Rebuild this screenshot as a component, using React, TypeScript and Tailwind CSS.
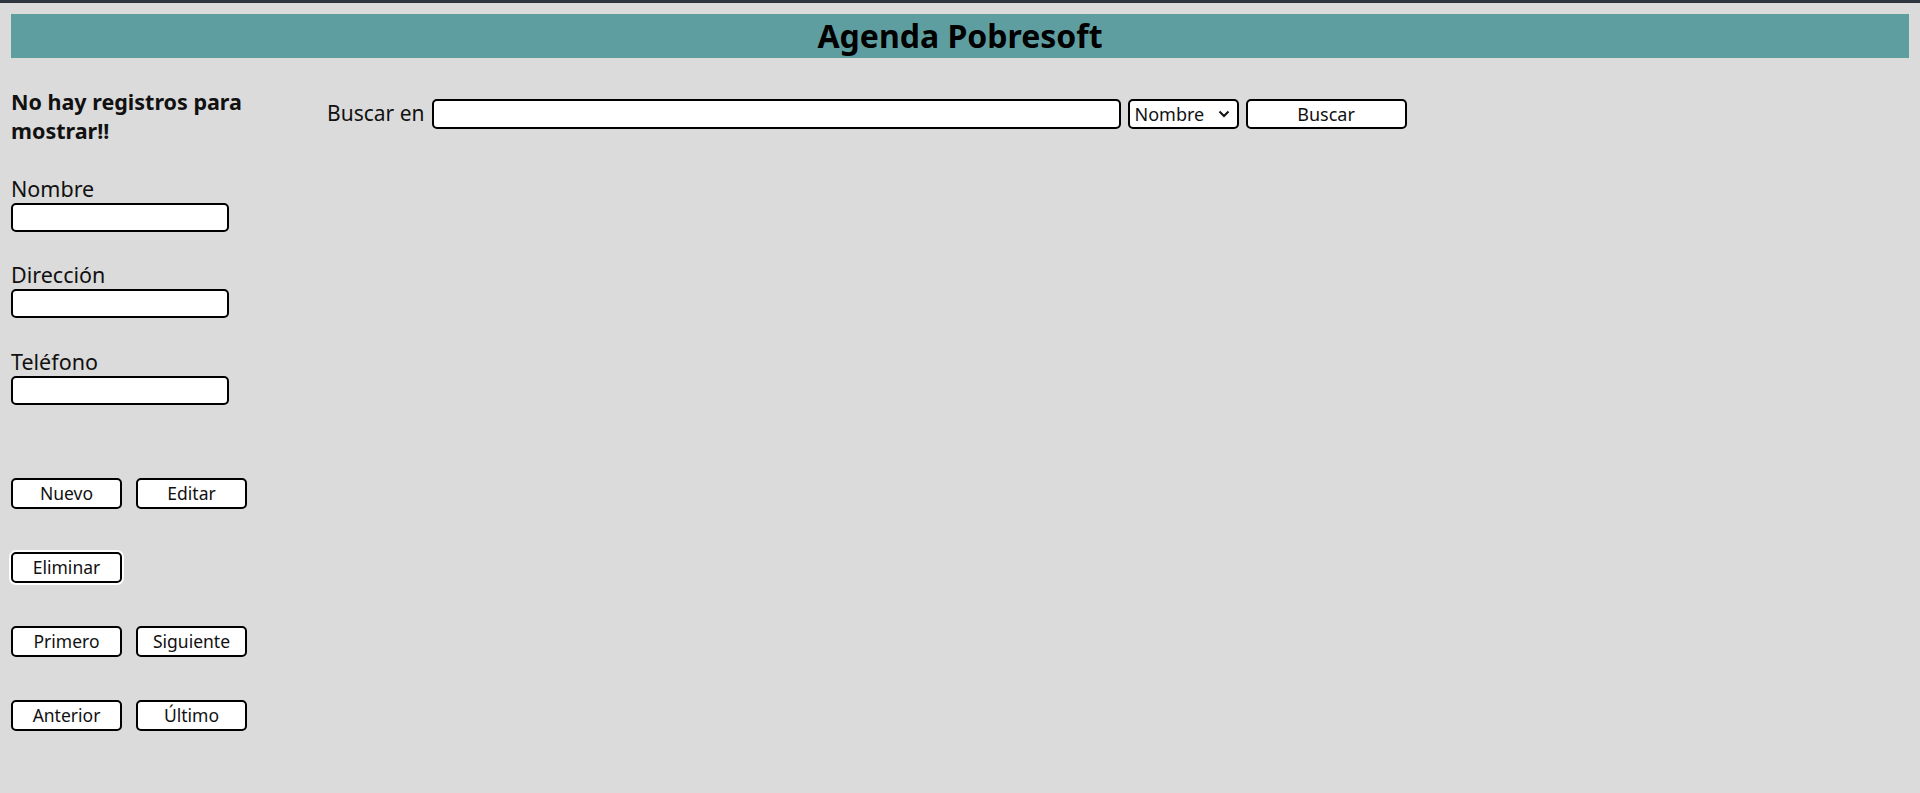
import React from 'react';

const btn =
    'h-[31px] w-[111px] rounded-[5px] border-2 border-black bg-white text-[17.5px] leading-none text-[#111]';

const Field: React.FC<{ label: string; className?: string }> = ({ label, className }) => (
    <div className={className}>
        <label className="block text-[21.5px] leading-[29px] text-[#111]">{label}</label>
        <input type="text" className="block h-[29px] w-[218px] rounded-[5px] border-2 border-black bg-white px-1 outline-none" />
    </div>
);

export default function App() {
    return (
        <div className="min-h-screen bg-[#dbdbdb] font-['Noto_Sans','Open_Sans',sans-serif] text-black">
            <div className="h-[3px] bg-[#2e3440]" />
            <div className="px-[11px] pt-[11px]">
                <h1 className="h-[44px] bg-[#5f9ea0] text-center text-[32px] font-bold leading-[44px] text-black">
                    Agenda Pobresoft
                </h1>
            </div>

            <div className="flex px-[11px]">
                <div className="w-[260px] shrink-0">
                    <h3 className="mt-[29px] w-[250px] text-[21.5px] font-bold leading-[29px] text-[#111]">
                        No hay registros para mostrar!!
                    </h3>
                    <Field label="Nombre" className="mt-[29px]" />
                    <Field label="Dirección" className="mt-[28px]" />
                    <Field label="Teléfono" className="mt-[29px]" />

                    <div className="mt-[73px] flex gap-[14px]">
                        <button className={btn}>Nuevo</button>
                        <button className={btn}>Editar</button>
                    </div>
                    <div className="mt-[43px] flex">
                        <button className={`${btn} ring-2 ring-white`}>Eliminar</button>
                    </div>
                    <div className="mt-[43px] flex gap-[14px]">
                        <button className={btn}>Primero</button>
                        <button className={btn}>Siguiente</button>
                    </div>
                    <div className="mt-[43px] flex gap-[14px]">
                        <button className={btn}>Anterior</button>
                        <button className={btn}>Último</button>
                    </div>
                </div>

                <div className="ml-[56px] mt-[41px] flex h-[30px] items-center gap-[7px]">
                    <span className="text-[21px] text-[#111]">Buscar en</span>
                    <input type="text" className="h-[30px] w-[689px] rounded-[5px] border-2 border-black bg-white px-1 outline-none" />
                    <div className="relative">
                        <select className="h-[30px] w-[111px] appearance-none rounded-[5px] border-2 border-black bg-white pl-[5px] text-[18px] text-[#111] outline-none">
                            <option>Nombre</option>
                            <option>Dirección</option>
                            <option>Teléfono</option>
                        </select>
                        <svg className="pointer-events-none absolute right-[9px] top-[11px]" width="12" height="8" viewBox="0 0 12 8">
                            <path d="M1.5 1.5 L6 6 L10.5 1.5" fill="none" stroke="#111" strokeWidth="2" />
                        </svg>
                    </div>
                    <button className="h-[30px] w-[161px] rounded-[5px] border-2 border-black bg-white text-[18px] text-[#111]">
                        Buscar
                    </button>
                </div>
            </div>
        </div>
    );
}
